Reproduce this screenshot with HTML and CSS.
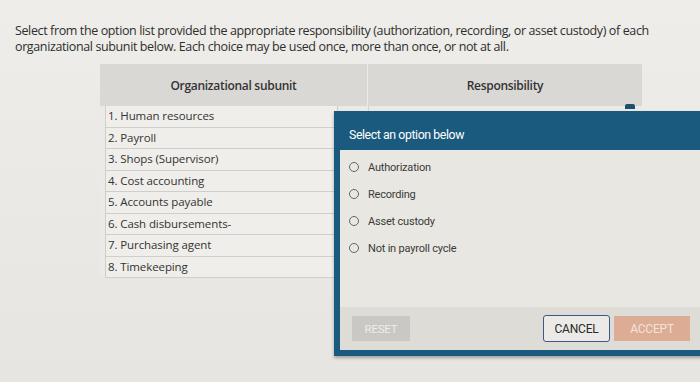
FILE: index.html
```html
<!DOCTYPE html>
<html lang="en">
<head>
    <meta charset="UTF-8">
    <meta name="viewport" content="width=device-width, initial-scale=1.0">
    <title>Responsibility</title>
    <link rel="stylesheet" href="styles.css">
</head>
<body>
    <div class="page">
        <p class="intro">Select from the option list provided the appropriate responsibility (authorization, recording, or asset custody) of each organizational subunit below. Each choice may be used once, more than once, or not at all.</p>

        <div class="grid">
            <div class="head">Organizational subunit</div>
            <div class="head">Responsibility</div>
            <div class="rows">
                <div class="row">1. Human resources</div>
                <div class="row">2. Payroll</div>
                <div class="row">3. Shops (Supervisor)</div>
                <div class="row">4. Cost accounting</div>
                <div class="row">5. Accounts payable</div>
                <div class="row">6. Cash disbursements-</div>
                <div class="row">7. Purchasing agent</div>
                <div class="row">8. Timekeeping</div>
            </div>
            <div class="answers"></div>
        </div>

        <span class="tab"></span>

        <div class="dialog">
            <div class="dialog-title">Select an option below</div>
            <div class="dialog-body">
                <label class="option"><span class="radio"></span>Authorization</label>
                <label class="option"><span class="radio"></span>Recording</label>
                <label class="option"><span class="radio"></span>Asset custody</label>
                <label class="option"><span class="radio"></span>Not in payroll cycle</label>
            </div>
            <div class="dialog-foot">
                <button class="btn reset">RESET</button>
                <span class="spacer"></span>
                <button class="btn cancel">CANCEL</button>
                <button class="btn accept">ACCEPT</button>
            </div>
        </div>
    </div>
</body>
</html>
```

FILE: styles.css
```css
body {
    margin: 0;
    background: linear-gradient(#eeede9, #e6e5e1);
    font-family: "Open Sans", Arial, sans-serif;
    color: #2e2e2e;
}
.page {
    position: relative;
    width: 700px;
    height: 382px;
    overflow: hidden;
}
.intro {
    margin: 0;
    padding: 23px 40px 0 15px;
    font-size: 12.5px;
    line-height: 16px;
    letter-spacing: -0.38px;
}
.grid {
    display: grid;
    grid-template-columns: 268px 275px;
    margin: 9px 0 0 100px;
    width: 543px;
}
.head {
    height: 42px;
    display: flex;
    align-items: center;
    justify-content: center;
    background: #d9d8d5;
    border-right: 1px solid #ecebe8;
    font-weight: 600;
    font-size: 12px;
    letter-spacing: -0.3px;
    color: #333;
}
.rows {
    padding: 0 30px 0 5px;
    background: #ebeae6;
}
.row {
    height: 20.5px;
    line-height: 20px;
    padding-left: 2px;
    font-size: 11.5px;
    letter-spacing: -0.1px;
    color: #333;
    border: 1px solid #cfcecb;
    border-top: none;
    background: #efeeea;
}
.answers {
    background: #ebeae6;
    border-left: 1px solid #d4d3d0;
}
.tab {
    position: absolute;
    left: 625px;
    top: 104px;
    width: 10px;
    height: 5px;
    background: #1e4f6c;
    border-radius: 2px 2px 0 0;
}
.dialog {
    position: absolute;
    left: 334px;
    top: 111px;
    width: 380px;
    height: 239px;
    border: 6px solid #1a5a7e;
    border-top: none;
    background: #e9e7e1;
    display: flex;
    flex-direction: column;
    font-family: Roboto, Arial, sans-serif;
    box-shadow: 0 2px 3px rgba(0, 0, 0, 0.3);
}
.dialog-title {
    background: #1a5a7e;
    color: #fff;
    height: 39px;
    line-height: 48px;
    padding-left: 9px;
    font-size: 12.3px;
    letter-spacing: -0.4px;
}
.dialog-body {
    flex: 1;
    display: flex;
    flex-direction: column;
    gap: 11px;
    padding: 9px 0 0 9px;
}
.option {
    display: flex;
    align-items: center;
    height: 16px;
    font-size: 11px;
    letter-spacing: -0.2px;
    color: #3a3a3a;
}
.radio {
    width: 8px;
    height: 8px;
    border: 1.3px solid #666;
    border-radius: 50%;
    margin-right: 9px;
}
.dialog-foot {
    display: flex;
    align-items: center;
    gap: 4px;
    height: 43px;
    padding: 0 30px 0 12px;
    background: #dddcd6;
}
.spacer {
    flex: 1;
}
.btn {
    height: 25px;
    border: none;
    font-family: Roboto, Arial, sans-serif;
    font-size: 11.5px;
    letter-spacing: -0.2px;
    color: #fff;
    padding: 0;
}
.reset {
    width: 58px;
    background: #c9c8c4;
    color: #eeeeec;
}
.cancel {
    width: 67px;
    height: 27px;
    background: #eceae6;
    border: 1.5px solid #3d5a86;
    border-radius: 3px;
    color: #2a2a2a;
    font-size: 12px;
}
.accept {
    width: 76px;
    background: #dcac95;
    color: #f4e3da;
    font-size: 12px;
}
```
